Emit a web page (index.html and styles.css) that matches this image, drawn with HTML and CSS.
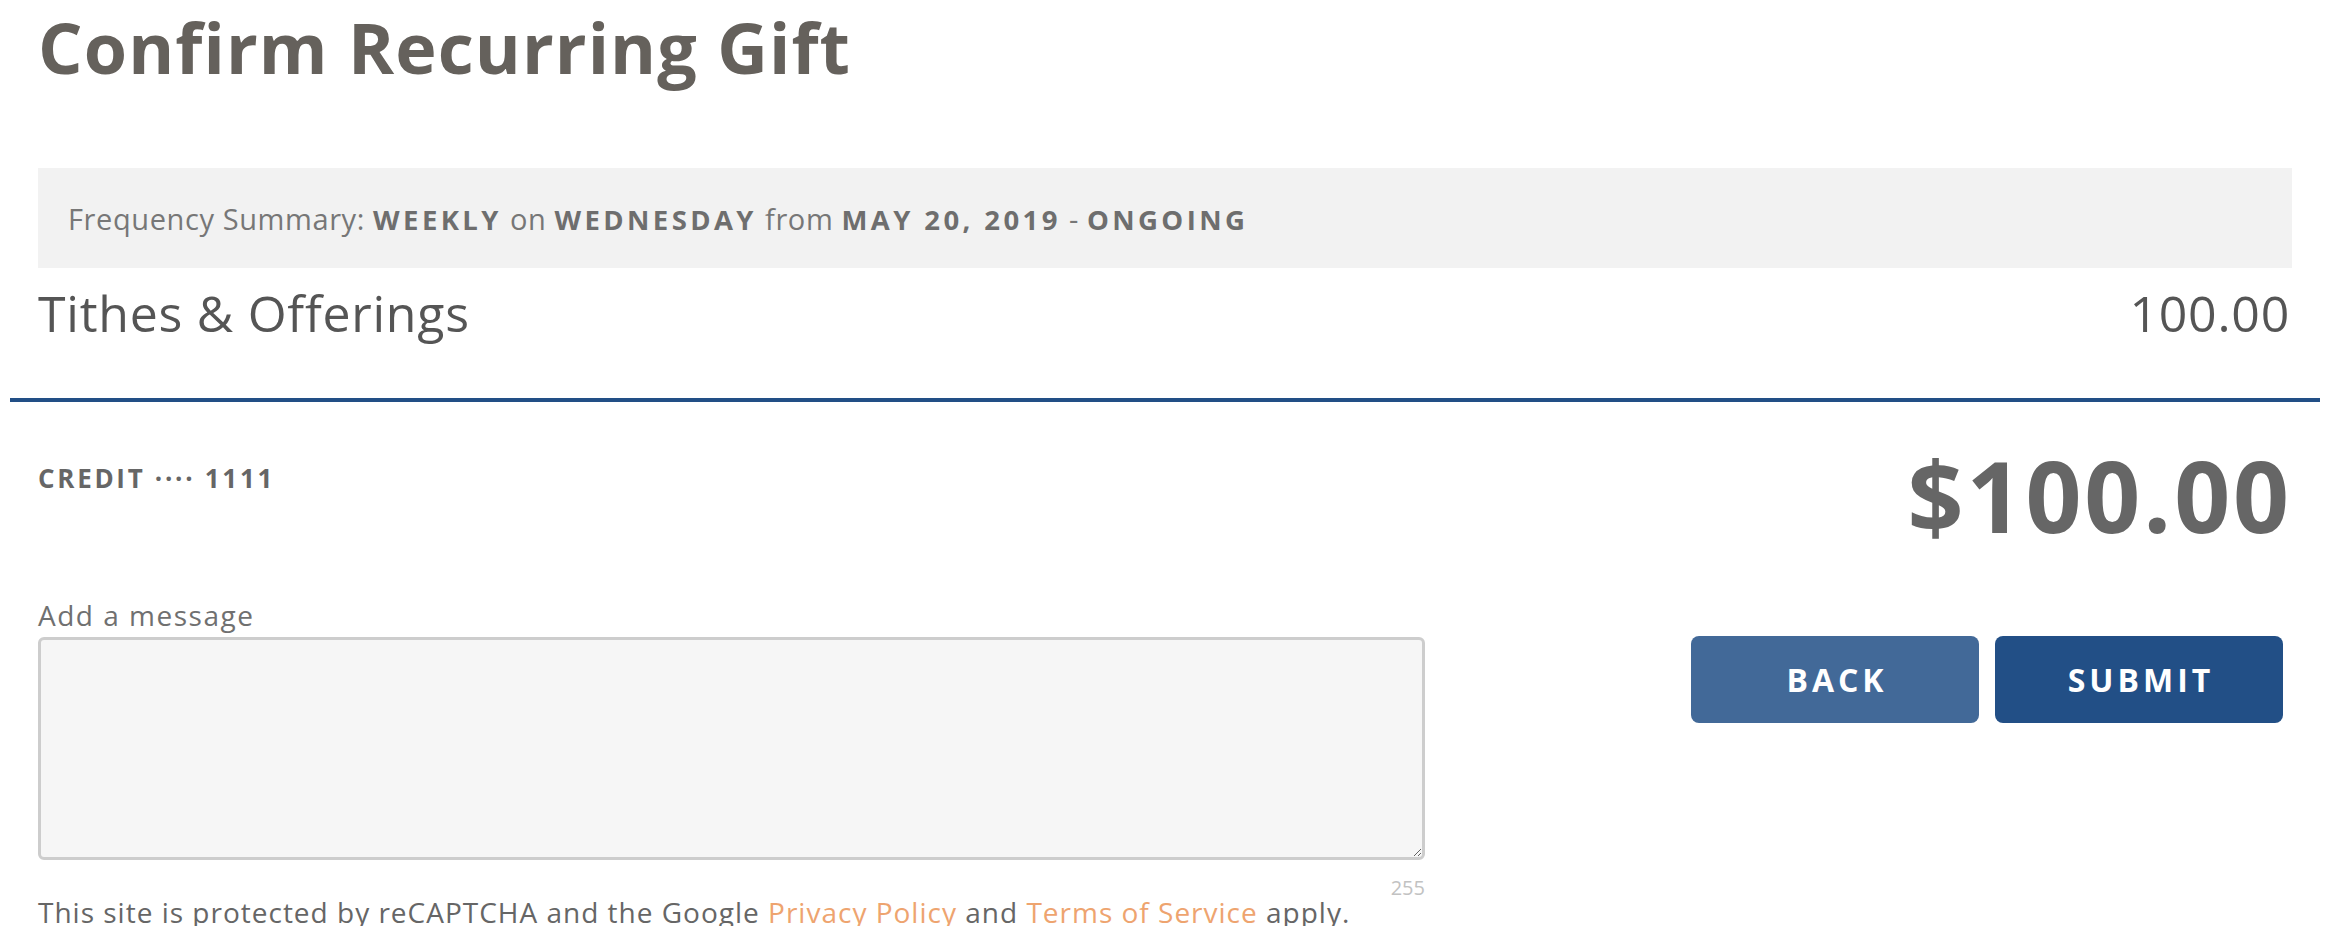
FILE: index.html
```html
<!DOCTYPE html>
<html lang="en">
<head>
<meta charset="utf-8">
<title>Confirm Recurring Gift</title>
<link rel="stylesheet" href="styles.css">
</head>
<body>
<div class="page">
  <div class="content">
    <h1 class="title">Confirm Recurring Gift</h1>
    <div class="summary">
      <span>Frequency Summary: <b>WEEKLY</b> on <b>WEDNESDAY</b> from <b>MAY 20, 2019</b> - <b>ONGOING</b></span>
    </div>
    <div class="fund-row">
      <span class="fund-name">Tithes &amp; Offerings</span>
      <span class="fund-amount">100.00</span>
    </div>
  </div>
  <hr class="divider">
  <div class="content lower">
    <div class="left-col">
      <div class="payment">CREDIT &middot;&middot;&middot;&middot; 1111</div>
      <label class="msg-label" for="msg">Add a message</label>
      <textarea id="msg" class="msg-box"></textarea>
      <div class="counter">255</div>
      <p class="recaptcha">This site is protected by reCAPTCHA and the Google <a href="#">Privacy Policy</a> and <a href="#">Terms of Service</a> apply.</p>
    </div>
    <div class="right-col">
      <div class="total">$100.00</div>
      <div class="buttons">
        <button class="btn btn-back">BACK</button>
        <button class="btn btn-submit">SUBMIT</button>
      </div>
    </div>
  </div>
</div>
</body>
</html>
```

FILE: styles.css
```css
* { box-sizing: border-box; }
html, body {
  margin: 0;
  padding: 0;
  background: #fff;
  font-family: "Open Sans", "Liberation Sans", sans-serif;
  overflow: hidden;
}
.page {
  padding: 0 18px 0 10px;
}
.content {
  padding: 0 28px;
}
.title {
  margin: 0;
  padding-top: 12px;
  font-size: 70px;
  line-height: 1;
  font-weight: 700;
  color: #65615c;
  letter-spacing: 1.1px;
}
.summary {
  margin-top: 86px;
  height: 100px;
  background: #f2f2f2;
  padding: 0 30px;
  display: flex;
  align-items: center;
  font-size: 29px;
  color: #777;
  letter-spacing: 0.6px;
}
.summary b {
  font-weight: 700;
  font-size: 27.5px;
  letter-spacing: 3.4px;
  color: #6e6e6e;
}
.fund-row {
  margin-top: 20px;
  display: flex;
  justify-content: space-between;
  font-size: 50px;
  line-height: 1;
  color: #555;
  letter-spacing: 0.75px;
}
.fund-amount {
  padding-right: 2px;
}
.divider {
  margin: 60px 0 0;
  border: 0;
  height: 4px;
  background: #224f86;
}
.lower {
  display: grid;
  grid-template-columns: 1387px 1fr;
}
.left-col {
  display: flex;
  flex-direction: column;
  padding-top: 63px;
}
.payment {
  font-size: 26px;
  line-height: 1;
  font-weight: 700;
  letter-spacing: 2.7px;
  color: #666;
}
.msg-label {
  margin-top: 110px;
  font-size: 28px;
  line-height: 1;
  color: #707070;
  letter-spacing: 1.5px;
}
.msg-box {
  margin-top: 8px;
  height: 223px;
  width: 100%;
  background: #f6f6f6;
  border: 3px solid #cdcdcd;
  border-radius: 6px;
  font: inherit;
}
.counter {
  margin-top: 18px;
  align-self: flex-end;
  font-size: 20px;
  line-height: 1;
  color: #c2c2c2;
}
.recaptcha {
  margin: 0;
  font-size: 28px;
  line-height: 1;
  color: #666;
  letter-spacing: 1px;
}
.recaptcha a {
  color: #eea46f;
  text-decoration: none;
}
.right-col {
  display: flex;
  flex-direction: column;
  align-items: flex-end;
  padding-top: 44px;
}
.total {
  font-size: 98px;
  line-height: 1;
  font-weight: 700;
  color: #666;
  letter-spacing: 2.9px;
  padding-right: 0;
}
.buttons {
  margin-top: 92px;
  display: flex;
  gap: 16px;
  padding-right: 9px;
}
.btn {
  width: 288px;
  height: 87px;
  border: 0;
  border-radius: 8px;
  color: #fff;
  font-family: inherit;
  font-size: 32px;
  font-weight: 700;
  letter-spacing: 4px;
  text-indent: 4px;
}
.btn-back { background: #426998; }
.btn-submit { background: #224f86; }
```
